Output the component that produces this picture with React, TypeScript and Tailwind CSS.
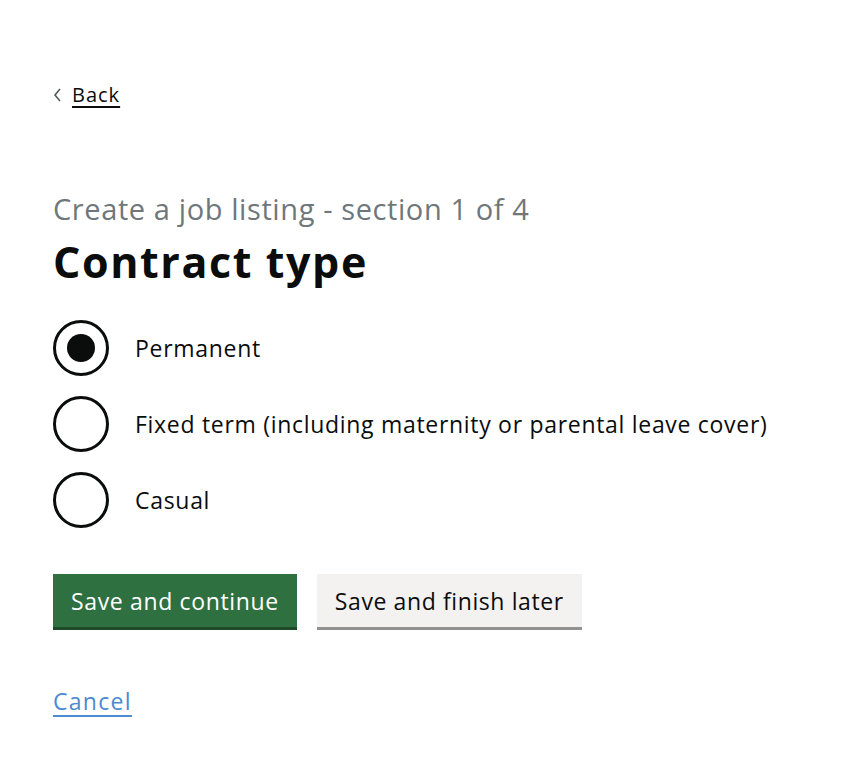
import React, { useState } from 'react';

const options = [
  { id: 'permanent', label: 'Permanent' },
  { id: 'fixed', label: 'Fixed term (including maternity or parental leave cover)' },
  { id: 'casual', label: 'Casual' },
];

export default function App() {
  const [selected, setSelected] = useState('permanent');

  return (
    <div className="min-h-[764px] w-[850px] bg-white text-[#0b0c0c] font-['Open_Sans',Arial,sans-serif]">
      <div className="pl-[53px] pt-[84px]">
        {/* Back link */}
        <a href="#" className="flex items-center gap-[10px] text-[20px] text-[#0b0c0c] leading-[22px] tracking-[1px] w-fit">
          <svg width="9" height="14" viewBox="0 0 9 14" className="text-[#505a5f]">
            <path d="M7 1 L2 7 L7 13" fill="none" stroke="currentColor" strokeWidth="1.6" />
          </svg>
          <span className="underline underline-offset-[4px] decoration-[1.5px]">Back</span>
        </a>

        {/* Heading */}
        <div className="mt-[88px] text-[29px] leading-[30px] text-[#6f777b] tracking-[0.6px]">
          Create a job listing - section 1 of 4
        </div>
        <h1 className="mt-[14px] text-[43px] leading-[48px] font-bold tracking-[1.6px]">Contract type</h1>

        {/* Radios */}
        <div className="mt-[34px] flex flex-col gap-[20px]">
          {options.map((o) => (
            <label key={o.id} className="flex items-center gap-[26px] cursor-pointer" onClick={() => setSelected(o.id)}>
              <span className="w-[56px] h-[56px] rounded-full border-[3px] border-[#0b0c0c] flex items-center justify-center shrink-0">
                {selected === o.id && <span className="w-[28px] h-[28px] rounded-full bg-[#0b0c0c]" />}
              </span>
              <span className="text-[23px] leading-[26px] tracking-[0.7px]">{o.label}</span>
            </label>
          ))}
        </div>

        {/* Buttons */}
        <div className="mt-[46px] flex gap-[20px]">
          <button className="h-[53px] px-[18px] bg-[#2e7040] text-white text-[23px] leading-[26px] tracking-[0.65px] shadow-[0_3px_0_#1e4a2a]">
            Save and continue
          </button>
          <button className="h-[53px] px-[18px] bg-[#f3f2f1] text-[#0b0c0c] text-[23px] leading-[26px] tracking-[0.6px] shadow-[0_3px_0_#929191]">
            Save and finish later
          </button>
        </div>

        {/* Cancel */}
        <a href="#" className="inline-block mt-[61px] text-[23px] leading-[26px] tracking-[1.3px] text-[#4c8bd0] underline underline-offset-[5px] decoration-[1.5px]">
          Cancel
        </a>
      </div>
    </div>
  );
}
